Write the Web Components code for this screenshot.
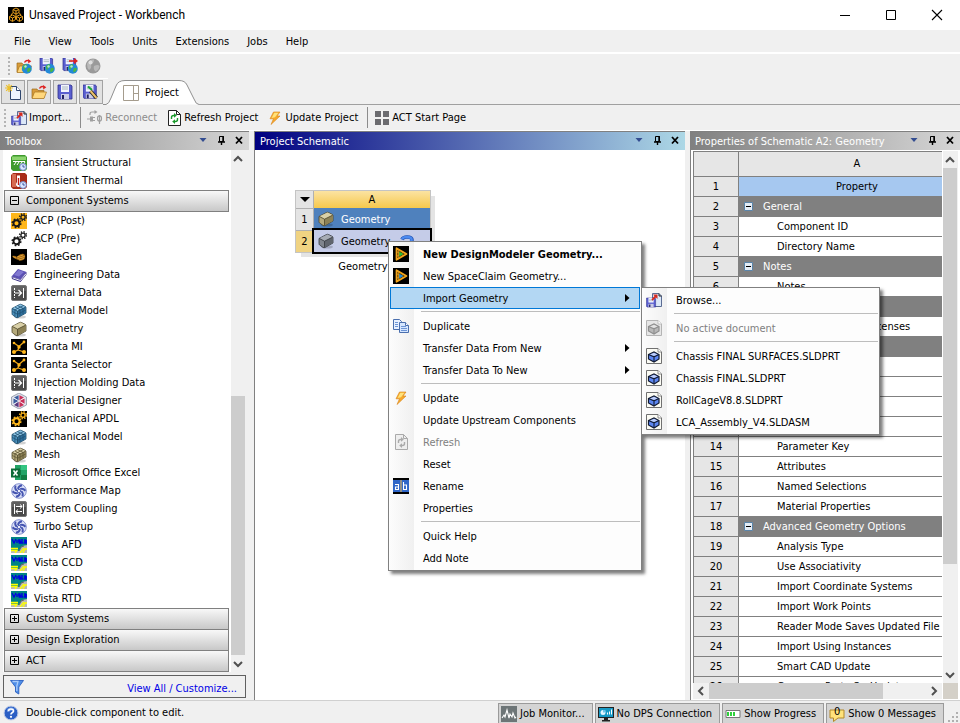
<!DOCTYPE html>
<html lang="en">
<head>
<meta charset="utf-8">
<meta name="viewport" content="width=device-width, initial-scale=1">
<title>Unsaved Project - Workbench</title>
<style>
  html, body {
    height: 100%;
    margin: 0;
  }
  body {
    font: 11px/16px "DejaVu Sans Condensed", "Noto Sans", sans-serif;
    color: #000;
    background: #f0f0f0;
    overflow: hidden;
  }
</style>
</head>
<body>
<workbench-app></workbench-app>

<script>
// Small base: every element renders its own css + html into an open shadow root
class WbElement extends HTMLElement {
  constructor() {
    super();
    this.attachShadow({ mode: 'open' });
  }

  connectedCallback() {
    this.shadowRoot.innerHTML = `<style>
      * { box-sizing: border-box; }
      button { font: inherit; color: inherit; margin: 0; padding: 0; border: 0; background: none; text-align: left; white-space: nowrap; }
      ${this.css()}
    </style>${this.render()}`;
  }

  css() { return ':host { display: block; }'; }
  render() { return '<slot></slot>'; }
}

const define = (name, cls) => {
  if (!customElements.get(name)) customElements.define(name, cls);
};

/* ---------- icons ---------- */

const gear = (x, y, r, c, w) => `
  <circle cx="${x}" cy="${y}" r="${r}" fill="none" stroke="${c}" stroke-width="${w}"/>
  <circle cx="${x}" cy="${y}" r="${r + 1.3}" fill="none" stroke="${c}" stroke-width="1.5" stroke-dasharray="${((r + 1.3) * Math.PI / 8).toFixed(2)}"/>`;
const gears = (c) => gear(5.5, 10.3, 3, c, 1.9) + gear(12, 4.2, 2.1, c, 1.3);

const box = (top, front, side, line) => `
  <ellipse cx="9" cy="14" rx="6" ry="1.6" fill="#000" opacity=".18"/>
  <path d="M1 5.5 8.5 1.5Q9.5 1 10.5 1.5L14.5 3.5Q15 4 15 5L15 10 7 14.5Q6 15 5 14.4L1.6 12Q1 11.5 1 10.5Z" fill="${front}" stroke="${line}" stroke-width=".8"/>
  <path d="M1.5 5.3 9.5 1.4 14.6 4 6.4 8.2Z" fill="${top}"/>
  <path d="M6.6 8.2 14.7 4.3V10L6.6 14.4Z" fill="${side}"/>
  <path d="M1.4 5.5 6.5 8.2V14.3M6.5 8.2 14.6 4.2" fill="none" stroke="${line}" stroke-width=".8"/>`;
const meshLines = (c) => `<path d="M4 4 9 6.8V13M6.8 2.7 12 5.4V11.5M3.9 7V13M1.3 8.4 6.5 11.3 14.7 7M4 6.8 12 2.8" fill="none" stroke="${c}" stroke-width=".8"/>`;

const floppy = (x, y, s, c = '#5a5fd0') => `
  <g transform="translate(${x} ${y}) scale(${s})">
    <path d="M0 0H13L14 1V14H1L0 13Z" fill="${c}" stroke="#30308c" stroke-width=".8"/>
    <path d="M3 0H11V7H3Z" fill="#f2f4ff"/><path d="M4 2H10M4 4H10" stroke="#9aa" stroke-width=".8"/>
    <path d="M3 9H11V14H3Z" fill="#c9cbe6"/><path d="M4 10H6V14H4Z" fill="#202060"/>
  </g>`;
const globe = `<circle cx="10.8" cy="10.8" r="5" fill="#2389d8"/><path d="M7 8Q9 5.500 11 6.500 12 8 10 9.500 8.500 10 8.500 12 6.500 11 7 8ZM11.500 10.500Q14 9 15 11 14 14 12 14.600 10.500 12.500 11.500 10.500Z" fill="#49b548"/><circle cx="9.500" cy="8.500" r="1.200" fill="#cdefff" opacity=".8"/>`;
const page = (stroke = '#222', fill = '#fff') => `<path d="M2.500 .500H10.500L14.500 4.500V15.500H2.500Z" fill="${fill}" stroke="${stroke}"/><path d="M10.500 .500V4.500H14.500" fill="none" stroke="${stroke}"/>`;
const refresh = (c) => `<path d="M5.500 9V7.500Q5.500 5.500 7.500 5.500H8.500" fill="none" stroke="${c}" stroke-width="1.400"/><path d="M8 3 10.800 5.400 8 7.800Z" fill="${c}"/><path d="M11.500 8V9.500Q11.500 11.500 9.500 11.500H8.500" fill="none" stroke="${c}" stroke-width="1.400"/><path d="M9 9.200 6.200 11.600 9 14Z" fill="${c}"/>`;
const partDoc = (edge, face, dark, bg) => `
  <path d="M.500 .500H12L15.500 4V15.500H.500Z" fill="${bg}" stroke="${edge}"/>
  <path d="M12 .500V4H15.500" fill="#fff" stroke="${edge}" stroke-width=".8"/>
  <path d="M2.500 6.500 8 4 13 6.500V11L8 14 2.500 11Z" fill="${face}" stroke="${dark}" stroke-width="1.200"/>
  <path d="M2.500 6.500 8 8.800 13 6.500M8 8.800V14" fill="none" stroke="${dark}" stroke-width="1.100"/>
  <path d="M4 6.400 8 4.800 11.500 6.400 8 8Z" fill="#fff" opacity=".6"/>`;
const importDoc = `<path d="M6.500 1.500H13L15.500 4V14.500H6.500Z" fill="#dce8f8" stroke="#5b6c93"/><path d="M13 1.500V4H15.500" fill="none" stroke="#222"/>${floppy(.5, 6, .65)}<path d="M6 8 10 4" stroke="#d62a1e" stroke-width="1.800"/><path d="M7 2.500H11.500V7Z" fill="#d62a1e"/>`;
const bolt = `<path d="M6.500 2 13 2 10 6 13 6 4 14.500 6.500 8.800 3 8.800Z" fill="#f6a82c" stroke="#d98316" stroke-width=".6"/><path d="M7.300 2.800 11.500 2.800 8 7.200 4.600 8Z" fill="#ffe27a"/>`;
const granta = `<path d="M0 0H16V16H0Z" fill="#000"/><path d="M3 4 8 7.500 13 3M8 7.500 7 11 3 13M7 11 13 13" fill="none" stroke="#f0a818" stroke-width="1.300"/><circle cx="3" cy="4" r="1.300" fill="#ffb71b"/><circle cx="13" cy="3" r="1.400" fill="#ffb71b"/><circle cx="3" cy="13" r="2" fill="#ffb71b"/><circle cx="13" cy="13" r="2" fill="#ffb71b"/><circle cx="8" cy="8" r="1.700" fill="#ffb71b"/>`;
const slab = (extra) => `<path d="M2 .500H14Q15.500 .500 15.500 2V14Q15.500 15.500 14 15.500H2Q.500 15.500 .500 14V2Q.500 .500 2 .500Z" fill="#4a4a4a" stroke="#777"/><path d="M1 1H15V6H1Z" fill="#fff" opacity=".12"/>${extra}`;
const fan = `<circle cx="8" cy="8" r="7.300" fill="#dde2f8" stroke="#8490cf"/><g stroke="#4454b0" stroke-width="1.900" fill="none">${[0, 60, 120, 180, 240, 300].map(a => `<path d="M7 6Q7.500 3 11 2.300" transform="rotate(${a} 8 8)"/>`).join('')}</g><circle cx="8" cy="8" r="1.600" fill="#fff" stroke="#4454b0" stroke-width=".9"/>`;
const vista = `<path d="M0 0H16V16H0Z" fill="#008484"/><path d="M1 2 3 6 5 2M6 3V6M9.500 3H7.800V4.500H9.500V6H7.600M11 2V6H12.500M15 3H13.800V6H15.200V3" stroke="#0000e0" stroke-width="1.400" fill="none"/><path d="M0 16V14H8L11 9 16 8V16Z" fill="#b9b9b9"/><path d="M0 11.500H7M0 13.500H6L4 16M9 16 13 11M12 16 14 12 16 12" stroke="#ffff00" stroke-width="1.300" fill="none"/><path d="M8 14 10 10 13 9" stroke="#666" fill="none"/>`;
const modelerTri = (c) => `<path d="M0 0H16V16H0Z" fill="#000"/><path d="M3.500 2.200 13.500 8 3.500 13.800Z" fill="#4a3205" stroke="#f2a51c" stroke-width="1.700" stroke-linejoin="round"/><path d="M5.800 3.500V12.500M3.500 5.500 10 9.500M3.500 10.500 10 6.500" stroke="#e09a1c" fill="none"/><path d="M6.300 5.700 10.300 8 6.300 10.400Z" fill="${c}"/>`;
const clock = `<circle cx="12" cy="12" r="3.400" fill="#dbe6ff" stroke="#6c86c4"/><path d="M12 10V12H13.800" stroke="#2b4a9a" stroke-width=".9" fill="none"/>`;
const folder = `<path d="M1 5H6L7 6.500H13V14H1Z" fill="#d89b3a" stroke="#9b6a1c" stroke-width=".7"/><path d="M3.500 8H15.500L13 14.500H1Z" fill="#ffd77c" stroke="#a8741f" stroke-width=".7"/>`;
const redo = `<path d="M8.500 4.500Q10 1.500 13 3" stroke="#d22" stroke-width="1.300" fill="none"/><path d="M12 1 15.300 3.200 12.300 5.500Z" fill="#d22"/>`;

const ICONS = {
  app: `<path d="M0 0H16V16H0Z" fill="#000"/><g fill="none" stroke="#e09a1c"><path d="M8 1 11 2.500V5.500L8 7 5 5.500V2.500ZM5 2.500 8 4 11 2.500M8 4V7"/><path d="M4.500 8 7.500 9.500V12.500L4.500 14.500 1.500 12.500V9.500ZM1.500 9.500 4.500 11 7.500 9.500M4.500 11V14M11.500 8 14.500 9.500V12.500L11.500 14.500 8.500 12.500V9.500ZM8.500 9.500 11.500 11 14.500 9.500M11.500 11V14"/><path d="M5 5.500 3 8M11 5.500 13 8M8 7V10"/></g>`,
  openGlobe: folder + redo + globe,
  saveGlobe: floppy(1, 0, .9) + globe,
  saveAsGlobe: floppy(1, 0, .9) + `<path d="M7 3H13" stroke="#d22" stroke-width="1.600"/><path d="M12 0 16 3 12 6Z" fill="#d22"/>` + globe,
  greyGlobe: `<circle cx="8" cy="8" r="7.500" fill="#9a9a9a"/><path d="M2 6Q4 1 9 1.500 9 5 6 6.500 7 10 4 12 2 10 2 6ZM9 8Q13 6 14.500 8 14 12 10.500 13.500Q8 11 9 8Z" fill="#b9b9b9"/><circle cx="5.500" cy="4.500" r="2" fill="#e8e8e8" opacity=".8"/>`,
  newDoc: `<path d="M5.500 2.500H11.500L15.500 6.500V15.500H5.500Z" fill="#eef5ff" stroke="#30476e"/><path d="M11.500 2.500V6.500H15.500" fill="#fff" stroke="#30476e"/><path d="M4 0V8M0 4H8M1.200 1.200 6.800 6.800M6.800 1.200 1.200 6.800" stroke="#ecc02d" stroke-width="1.200"/>`,
  open: folder + redo,
  save: floppy(1, 1, 1),
  saveAs: floppy(0, 1, .95) + `<path d="M5 2.500 9 6" stroke="#1ca83a" stroke-width="2"/><path d="M7.500 7 13.500 14" stroke="#222" stroke-width="3.600"/><path d="M7.500 7 13.500 14" stroke="#ecc06a" stroke-width="2"/>`,
  layout: `<path d="M.500 .500H15.500V15.500H.500ZM10.500 .500V15.500M10.500 8.500H15.500" fill="#fff" stroke="#a59c8d"/>`,
  import: importDoc,
  reconnect: `<g fill="none" stroke="#a0a0a0" stroke-width="1.200"><path d="M3 5V4Q3 2 5 2H8"/><ellipse cx="12.500" cy="8.500" rx="2" ry="2.600"/><path d="M12.500 5V14M0 9H3"/></g><path d="M7.500 0 10.500 2 7.500 4ZM3 6.500H6V11.500H3ZM6 7H8V8H6ZM6 10H8V11H6Z" fill="#a0a0a0"/>`,
  refresh: page() + refresh('#1a9a2c'),
  refreshGrey: page('#aaa', '#eee') + refresh('#aaa'),
  bolt,
  grid: `<path d="M1 1H7V7H1ZM9 1H15V7H9ZM1 9H7V15H1ZM9 9H15V15H9Z" fill="#6b6b6f"/>`,
  structural: `<path d="M2 0H14L16 2V14L14 16H2L0 14V2Z" fill="#3f9a2e"/><path d="M1 1.500H15V5H1Z" fill="#8bd46e"/><path d="M2 6.500H14M3 10 5 7M6 10 8 7M9 10 11 7M12 10 14 7" stroke="#fff" fill="none"/>` + clock,
  thermal: `<path d="M2 0H14L16 2V14L14 16H2L0 14V2Z" fill="#a82c18"/><path d="M1 1H5V14H1Z" fill="#d66a50"/><path d="M6 2.500H9V9L10 11Q10 14 7.500 14 5 14 5 11L6 9Z" fill="#fff"/><path d="M7.500 5V12" stroke="#c41a10" stroke-width="1.400"/>` + clock,
  acpPost: `<path d="M0 0H16V16H0Z" fill="#ffb71b"/>` + gears('#1a1a1a'),
  acpPre: gears('#1a1a1a'),
  apdl: `<path d="M0 0H16V16H0Z" fill="#000"/>` + gears('#ffb71b'),
  bladegen: `<path d="M0 0H16V16H0Z" fill="#000"/><path d="M1 7Q4 6 6 8 9 4 13 5 15 7 13.500 10 10 13 6 10.500 3 10 1 7Z" fill="#9a6414"/><path d="M6 8 12 6M6.500 9.500 13.500 7.500M8 11 13 9.500M2 7.500 5 9" stroke="#f2ae3e" stroke-width=".8" fill="none"/>`,
  book: `<path d="M.500 9.500 7 2 15.500 5 9.500 12.500Z" fill="#5b50b4"/><path d="M3 8 7.500 3 13 5 8 9.600Z" fill="#8078d0"/><path d="M.500 9.500 9.500 12.500 15.500 5V7.500L9.500 15 1 12Z" fill="#352c80"/><path d="M1.500 10.800 9.500 13.500 15 6.800" stroke="#e8e6f8" stroke-width="1" fill="none"/>`,
  external: slab('<path d="M3.500 3V13M12.500 3V13" stroke="#fff" stroke-dasharray="2 1"/><path d="M12.500 3V13" stroke="#fff"/><path d="M4 8H10M7.500 5 10.500 8 7.500 11" fill="none" stroke="#fff" stroke-width="1.200"/>'),
  coupling: slab('<path d="M3.500 3V13M12.500 3V13M5 5.500H11M5 10.500H11M9 3.500 11.200 5.500 9 7.500M7 8.500 4.800 10.500 7 12.500" fill="none" stroke="#fff"/>'),
  boxBlue: box('#8cc2e2', '#4d92bd', '#2f6f9b', '#1c4663') + meshLines('#1f5275'),
  boxTan: box('#d9d0a8', '#b5aa7c', '#8d8256', '#4c452a'),
  boxGrey: box('#a6abb3', '#80858d', '#60656d', '#33373c'),
  mesh: box('#d9d0a8', '#b5aa7c', '#8d8256', '#4c452a') + meshLines('#5e5533'),
  granta,
  material: `<path d="M8 0 15.500 4V12L8 16 .500 12V4Z" fill="#d9dde6" stroke="#8d94a6" stroke-width=".8"/><path d="M8 8V2L3 4.500ZM8 8 2.500 5.500V11Z" fill="#3d5d9e"/><path d="M8 8V2L13 4.500ZM8 8 13.500 11V5.500ZM8 8 13 12 8 14.500Z" fill="#c9305a"/><path d="M8 8V14.500L3 12Z" fill="#5b3a80"/><path d="M8 1.500V15M2 4.500 14 11.500M14 4.500 2 11.500" stroke="#fff" stroke-width=".7"/>`,
  excel: `<path d="M4 0H16V15H4Z" fill="#21a366"/><path d="M10 0H16V5H10Z" fill="#33c481"/><path d="M4 5H10V10H4ZM10 10H16V15H10Z" fill="#107c41"/><path d="M0 3.500H9V12.500H0Z" fill="#0e6b38"/><path d="M2.500 5.500 6.500 10.500M6.500 5.500 2.500 10.500" stroke="#fff" stroke-width="1.500"/>`,
  fan,
  vista,
  funnel: `<path d="M1.500 1.500H14.500L9.800 8V15L6.500 13V8Z" fill="#4f8fe8" stroke="#2a5fc0" stroke-width=".9"/><path d="M3.500 2.500H9L7.800 7V12" fill="none" stroke="#a9cbfa" stroke-width="1.300"/>`,
  help: `<circle cx="8" cy="8" r="7" fill="#2b5fc4" stroke="#c7d2e8"/><path d="M4 4Q8 .500 12 4 9 6 4 7Z" fill="#79a5ee" opacity=".7"/><path d="M5.500 6.300Q5.500 4 8 4 10.600 4 10.500 6.200 10.400 7.200 8.800 8 8 8.500 8 9.600" fill="none" stroke="#fff" stroke-width="1.700"/><circle cx="8" cy="11.800" r="1.100" fill="#fff"/>`,
  question: `<path d="M3 4.500Q4 2 8 2 13 2 13 5 13 8 9 9V12" fill="none" stroke="#1f4fae" stroke-width="3.600"/><path d="M3 4.200Q4 2 8 2 12.700 2 12.700 5 12.500 7.800 8.800 8.700V12" fill="none" stroke="#4b8af0" stroke-width="2.400"/>`,
  modeler: modelerTri('#22c03a'),
  spaceclaim: modelerTri('#1c8ce0'),
  duplicate: `<g stroke="#4a6fae"><path d="M.500 1.500H6.500L8.500 3.500V11.500H.500Z" fill="#e8f1ff"/><path d="M6.500 4.500H12.500L15.500 7.500V14.500H6.500Z" fill="#d5e6ff"/><path d="M2 4.500H5M2 6.500H5M2 8.500H5M8 8.500H13M8 10.500H14M8 12.500H14" stroke="#6d95d6"/><path d="M12.500 4.500V7.500H15.500" fill="#fff"/></g>`,
  rename: `<path d="M0 0H16V16H0Z" fill="#000"/><path d="M0 2H16V14H0Z" fill="#2f66c8"/><path d="M8 2V14" stroke="#f2b94a"/><path d="M2 6.500H5.500V11.500H2.500V9H5.500M10.500 4V11.500H13.500V7H10.500" fill="none" stroke="#fff" stroke-width="1.100"/>`,
  part: partDoc('#707070', '#5c86f2', '#111a30', '#fbfbf4'),
  partGrey: partDoc('#b4b4b4', '#b8b8b8', '#8e8e8e', '#e6e6e6'),
  monitor: `<path d="M0 0H16V16H0Z" fill="#6d7577"/><path d="M1 12 3 9 4 11 6 4 8 12 9 8 11 11 12 7 14 12 15 11" fill="none" stroke="#fff" stroke-width="1.100"/>`,
  dps: `<path d="M0 1H16V12H0Z" fill="#222"/><path d="M1 2H15V11H1Z" fill="#1799c4"/><path d="M6 12H10V14H12V15.500H4V14H6Z" fill="#222"/><circle cx="5" cy="6.500" r="2.500" fill="#e4f6ff"/><path d="M5 6.500V4H7.500V6.500Z" fill="#6cc4e6"/><path d="M9 8.500H10V6.500H9ZM11 8.500H12V5.500H11ZM13 8.500H14V3.500H13Z" fill="#fff"/>`,
  progress: `<path d="M1 4.500H15V11.500H1Z" fill="#fff" stroke="#777"/><path d="M2 6H4V10H2ZM5 6H7V10H5ZM8 6H10V10H8Z" fill="#2fd03c"/>`,
  message: `<path d="M1 4H15V12H9L4.500 15.500V12H1Z" fill="#ffe27a" stroke="#b4892a"/>`,
  down: `<path d="M4.500 6H11.500L8 10Z" fill="#334d91"/>`,
  pin: `<path d="M6.500 4.500H10.500V9.500H6.500Z" fill="none" stroke="#000"/><path d="M10 4V9M5 10H12M8.500 10V13" stroke="#000" stroke-width="1.400" fill="none"/>`,
  close: `<path d="M5 5 11 11.500M11 5 5 11.500" stroke="#000" stroke-width="1.800"/>`,
  arrowUp: `<path d="M4 10 8 6 12 10" fill="none" stroke="#505050" stroke-width="2"/>`,
  arrowDown: `<path d="M4 6 8 10 12 6" fill="none" stroke="#505050" stroke-width="2"/>`,
  arrowLeft: `<path d="M10 4 6 8 10 12" fill="none" stroke="#505050" stroke-width="2"/>`,
  arrowRight: `<path d="M6 4 10 8 6 12" fill="none" stroke="#505050" stroke-width="2"/>`,
  plus: `<path d="M3.500 3.500H11.500V11.500H3.500ZM5 7.500H10M7.500 5V10" fill="none" stroke="#000"/>`,
  minus: `<path d="M3.500 3.500H11.500V11.500H3.500ZM5 7.500H10" fill="none" stroke="#000"/>`,
  collapse: `<path d="M4.500 3.500H12.500V11.500H4.500Z" fill="#e4ecf4" stroke="#5b84a8"/><path d="M6 7.500H11" stroke="#000"/>`,
  winMin: `<path d="M3 8.500H13" stroke="#000"/>`,
  winMax: `<path d="M3.500 3.500H12.500V12.500H3.500Z" fill="none" stroke="#000"/>`,
  winClose: `<path d="M3 3 13 13M13 3 3 13" stroke="#000" stroke-width="1.100"/>`,
  subArrow: `<path d="M6 4V12L10.500 8Z" fill="#000"/>`
};

class WbIcon extends WbElement {
  css() {
    return ':host { display: inline-block; width: 16px; height: 16px; flex: none; } svg { display: block; width: 100%; height: 100%; }';
  }
  render() {
    return `<svg viewBox="0 0 16 16" aria-hidden="true">${ICONS[this.getAttribute('name')] || ''}</svg>`;
  }
}

/* ---------- window chrome ---------- */

class WbTitlebar extends WbElement {
  css() {
    return `
      :host { display: flex; align-items: center; height: 30px; padding-left: 8px; background: #fff; font: 12px/16px Roboto, "Noto Sans", sans-serif; }
      .title { flex: 1; padding-left: 5px; }
      button { display: grid; place-items: center; width: 46px; height: 28px; }
    `;
  }
  render() {
    return `<wb-icon name="app"></wb-icon><span class="title"><slot></slot></span>
      <button aria-label="Minimize"><wb-icon name="winMin"></wb-icon></button>
      <button aria-label="Maximize"><wb-icon name="winMax"></wb-icon></button>
      <button aria-label="Close"><wb-icon name="winClose"></wb-icon></button>`;
  }
}

class WbMenubar extends WbElement {
  css() {
    return `
      :host { display: block; border-bottom: 2px solid #fff; }
      nav { display: flex; align-items: center; height: 22px; gap: 18px; padding: 2px 14px 0; }
    `;
  }
  render() {
    const items = ['File', 'View', 'Tools', 'Units', 'Extensions', 'Jobs', 'Help'];
    return `<nav>${items.map(i => `<button>${i}</button>`).join('')}</nav>`;
  }
}

class WbGrip extends WbElement {
  css() {
    return ':host { display: block; flex: none; width: 2px; height: 18px; background: repeating-linear-gradient(#b4b4b4 0 2px, transparent 2px 4px); }';
  }
  render() { return ''; }
}

class WbToolButton extends WbElement {
  css() {
    return `
      :host { display: block; flex: none; }
      button { display: flex; align-items: center; gap: 2px; height: 20px; }
      :host([framed]) button { width: 24px; height: 24px; justify-content: center; border: 1px solid #a3a3a3; background: #e2e2e2; }
      button:disabled { color: #8c8c8c; }
    `;
  }
  render() {
    const label = this.getAttribute('label');
    return `<button ${label ? `aria-label="${label}"` : ''} ${this.hasAttribute('disabled') ? 'disabled' : ''}><wb-icon name="${this.getAttribute('icon')}"></wb-icon><slot></slot></button>`;
  }
}

class WbToolbars extends WbElement {
  css() {
    return `
      :host { display: block; }
      .row { display: flex; align-items: center; }
      .remote { height: 25px; gap: 7px; padding-left: 8px; width: 108px; border-bottom: 1px solid #fff; }
      .remote wb-grip { margin-right: -1px; }
      .tabs { height: 26px; align-items: stretch; }
      .files { display: flex; align-items: center; gap: 2px; padding-left: 1px; }
      .tab { display: grid; }
      .tab svg { grid-area: 1 / 1; width: 96px; height: 26px; display: block; }
      .tab button { grid-area: 1 / 1; display: flex; align-items: center; gap: 6px; padding: 2px 0 0 20px; }
      .rule { flex: 1; border-bottom: 1px solid #a0a0a0; }
      .actions { height: 26px; gap: 9px; padding-left: 4px; border-bottom: 1px solid #fff; }
      .actions wb-grip { margin-right: -4px; }
      .sep { width: 1px; height: 21px; background: #8c8c8c; margin-right: -3px; }
    `;
  }
  render() {
    return `
      <div class="row remote">
        <wb-grip></wb-grip>
        <wb-tool-button icon="openGlobe" label="Open from repository"></wb-tool-button>
        <wb-tool-button icon="saveGlobe" label="Save to repository"></wb-tool-button>
        <wb-tool-button icon="saveAsGlobe" label="Send changes"></wb-tool-button>
        <wb-tool-button icon="greyGlobe" label="Manage connections" disabled></wb-tool-button>
      </div>
      <div class="row tabs">
        <div class="files">
          <wb-tool-button framed icon="newDoc" label="New"></wb-tool-button>
          <wb-tool-button framed icon="open" label="Open"></wb-tool-button>
          <wb-tool-button framed icon="save" label="Save"></wb-tool-button>
          <wb-tool-button framed icon="saveAs" label="Save as"></wb-tool-button>
        </div>
        <div class="tab">
          <svg viewBox="0 0 96 26" aria-hidden="true"><path d="M0 25.500H3Q6 25 8 19L13 7Q15 1.500 22 1.500H76Q82 1.500 84 6L91 20Q93 25.500 96 25.500" fill="#fff" stroke="#909090"/></svg>
          <button><wb-icon name="layout"></wb-icon>Project</button>
        </div>
        <div class="rule"></div>
      </div>
      <div class="row actions">
        <wb-grip></wb-grip>
        <wb-tool-button icon="import">Import...</wb-tool-button>
        <span class="sep"></span>
        <wb-tool-button icon="reconnect" disabled>Reconnect</wb-tool-button>
        <wb-tool-button icon="refresh">Refresh Project</wb-tool-button>
        <wb-tool-button icon="bolt">Update Project</wb-tool-button>
        <span class="sep"></span>
        <wb-tool-button icon="grid">ACT Start Page</wb-tool-button>
      </div>`;
  }
}

/* ---------- docked panels ---------- */

class WbPanel extends WbElement {
  css() {
    return `
      :host { display: flex; flex-direction: column; min-width: 0; min-height: 0; border-top: 1px solid #808080; }
      header { display: flex; align-items: center; height: 18px; flex: none; padding: 2px 2px 0 5px; color: #fff; background: linear-gradient(90deg, #808080, #d6d6d6); }
      :host([active]) { border-left: 1px solid #808080; }
      :host([active]) header { background: linear-gradient(90deg, #000080, #add8e6); }
      h2 { flex: 1; min-width: 0; margin: 0; font: inherit; white-space: nowrap; overflow: hidden; }
      .tools { display: flex; gap: 2px; }
      .body { flex: 1; display: flex; flex-direction: column; min-height: 0; }
    `;
  }
  render() {
    return `<header><h2>${this.getAttribute('heading')}</h2><span class="tools">
        <button aria-label="Options"><wb-icon name="down"></wb-icon></button>
        <button aria-label="Pin"><wb-icon name="pin"></wb-icon></button>
        <button aria-label="Close"><wb-icon name="close"></wb-icon></button>
      </span></header><div class="body"><slot></slot></div>`;
  }
}

// range: flex weights of the track before, on and after the thumb
class WbScrollbar extends WbElement {
  css() {
    return `
      :host { display: flex; flex-direction: column; flex: none; width: 15px; background: #f0f0f0; }
      :host([horizontal]) { flex-direction: row; width: auto; height: 16px; flex: 1; }
      button { flex: none; height: 17px; }
      :host(:not([horizontal])) button { margin-left: -1px; }
      :host([horizontal]) button { height: 16px; }
      .track { flex: 1; display: flex; flex-direction: inherit; }
      .thumb { background: #cdcdcd; }
      :host(:not([horizontal])) .thumb { width: 14px; }
      wb-icon { display: block; }
    `;
  }
  render() {
    const [before, thumb, after] = this.getAttribute('range').split(' ');
    const h = this.hasAttribute('horizontal');
    return `<button aria-label="Scroll back"><wb-icon name="${h ? 'arrowLeft' : 'arrowUp'}"></wb-icon></button>
      <div class="track"><i style="flex:${before}"></i><i class="thumb" style="flex:${thumb}"></i><i style="flex:${after}"></i></div>
      <button aria-label="Scroll forward"><wb-icon name="${h ? 'arrowRight' : 'arrowDown'}"></wb-icon></button>`;
  }
}

class WbToolItem extends WbElement {
  css() {
    return ':host { display: flex; align-items: center; gap: 7px; box-sizing: border-box; height: 18px; padding: 2px 0 0 8px; white-space: nowrap; }';
  }
  render() {
    return `<wb-icon name="${this.getAttribute('icon')}"></wb-icon><slot></slot>`;
  }
}

class WbToolGroup extends WbElement {
  css() {
    return `
      :host { display: block; }
      :host([open]) { margin: 1px 0; }
      button { display: flex; align-items: center; gap: 3px; width: calc(100% - 3px); height: 22px; margin: 0 2px -1px 1px; padding: 0 2px; border: 1px solid #808080; background: linear-gradient(#f8f8f8, #c8c8c8); }
    `;
  }
  render() {
    const open = this.hasAttribute('open');
    return `<button aria-expanded="${open}"><wb-icon name="${open ? 'minus' : 'plus'}"></wb-icon>${this.getAttribute('heading')}</button><slot></slot>`;
  }
}

class WbToolbox extends WbElement {
  css() {
    return `
      :host { flex: 1; display: flex; flex-direction: column; min-height: 0; padding: 0 3px 2px; gap: 3px; }
      .scroll { flex: 1; display: flex; min-height: 0; }
      .list { flex: 1; min-width: 0; padding-top: 3px; background: #fff; overflow: hidden; }
      footer { display: flex; align-items: center; justify-content: space-between; height: 23px; flex: none; padding: 0 8px 0 5px; border: 1px solid #606060; }
      a { color: #0000e6; text-decoration: none; padding-top: 4px; }
    `;
  }
  render() {
    const item = ([icon, text]) => `<wb-tool-item icon="${icon}">${text}</wb-tool-item>`;
    const top = [['structural', 'Transient Structural'], ['thermal', 'Transient Thermal']];
    const components = [
      ['acpPost', 'ACP (Post)'], ['acpPre', 'ACP (Pre)'], ['bladegen', 'BladeGen'],
      ['book', 'Engineering Data'], ['external', 'External Data'], ['boxBlue', 'External Model'],
      ['boxTan', 'Geometry'], ['granta', 'Granta MI'], ['granta', 'Granta Selector'],
      ['external', 'Injection Molding Data'], ['material', 'Material Designer'], ['apdl', 'Mechanical APDL'],
      ['boxBlue', 'Mechanical Model'], ['mesh', 'Mesh'], ['excel', 'Microsoft Office Excel'],
      ['fan', 'Performance Map'], ['coupling', 'System Coupling'], ['fan', 'Turbo Setup'],
      ['vista', 'Vista AFD'], ['vista', 'Vista CCD'], ['vista', 'Vista CPD'], ['vista', 'Vista RTD']
    ];
    return `
      <div class="scroll">
        <div class="list">
          ${top.map(item).join('')}
          <wb-tool-group open heading="Component Systems">${components.map(item).join('')}</wb-tool-group>
          <wb-tool-group heading="Custom Systems"></wb-tool-group>
          <wb-tool-group heading="Design Exploration"></wb-tool-group>
          <wb-tool-group heading="ACT"></wb-tool-group>
        </div>
        <wb-scrollbar range="229 259 0"></wb-scrollbar>
      </div>
      <footer><wb-icon name="funnel"></wb-icon><a href="#customize">View All / Customize...</a></footer>`;
  }
}

/* ---------- schematic + menus ---------- */

class WbSystem extends WbElement {
  css() {
    return `
      :host { display: block; width: 136px; }
      table { width: 100%; border-collapse: separate; border-spacing: 0; background: #e4e4e4; box-shadow: 5px 5px 0 -1px #e4e4e4; border: 1px solid #c4c4c4; table-layout: fixed; }
      th, td { padding: 0; font-weight: normal; height: 22px; line-height: 16px; }
      th:first-child { width: 18px; border-right: 1px solid #b0b0b0; }
      thead th { height: 17px; }
      thead th + th { background: linear-gradient(#fbe3a2, #f6c84c); }
      tbody th { border-top: 1px solid #b0b0b0; }
      .title td { background: #4f81bd; color: #fff; }
      .cell td { background: #c5cce8; outline: 2px solid #000; }
      .cell th { background: #f0d382; }
      div { display: flex; align-items: center; gap: 7px; padding-left: 4px; }
      span { padding-top: 2px; }
      .state { margin: 2px 0 -2px 2px; }
      p { margin: 6px 0 0; text-align: center; }
      .tri { display: block; margin: 0 auto; width: 0; border: 5px solid transparent; border-top-color: #000; border-bottom: 0; }
    `;
  }
  render() {
    return `
      <table>
        <thead><tr><th><i class="tri"></i></th><th>A</th></tr></thead>
        <tbody>
          <tr class="title"><th>1</th><td><div><wb-icon name="boxTan"></wb-icon><span>Geometry</span></div></td></tr>
          <tr class="cell"><th>2</th><td><div><wb-icon name="boxGrey"></wb-icon><span>Geometry</span><wb-icon class="state" name="question"></wb-icon></div></td></tr>
        </tbody>
      </table>
      <p>Geometry</p>`;
  }
}

class WbMenu extends WbElement {
  css() {
    return `
      :host { display: block; box-sizing: border-box; padding: 1px; border: 1px solid #808080; background: linear-gradient(90deg, #fcfcfc, #f0f0f0) 1px 0 / 24px 100% no-repeat, #fdfdfd; box-shadow: 3px 3px 3px rgba(0, 0, 0, .5); color: #000; }
    `;
  }
}

class WbMenuItem extends WbElement {
  css() {
    return `
      :host { display: block; position: relative; }
      button { display: flex; align-items: center; width: 100%; height: 22px; padding: 0 4px 0 2px; border: 1px solid transparent; }
      .icon { width: 16px; margin-right: 14px; display: flex; }
      .label { flex: 1; padding-top: 2px; }
      :host([strong]) .label { font-weight: bold; }
      :host([selected]) button { border-color: #0078d7; background: #b3d7f3; }
      button:disabled { color: #808080; }
      ::slotted(wb-menu) { position: absolute; left: 100%; top: 0; margin-left: 1px; width: 239px; z-index: 2; }
    `;
  }
  render() {
    const icon = this.getAttribute('icon');
    return `<button ${this.hasAttribute('disabled') ? 'disabled' : ''}><span class="icon">${icon ? `<wb-icon name="${icon}"></wb-icon>` : ''}</span><span class="label">${this.getAttribute('label')}</span>${this.hasAttribute('submenu') ? '<wb-icon name="subArrow"></wb-icon>' : ''}</button><slot></slot>`;
  }
}

class WbMenuSeparator extends WbElement {
  css() { return ':host { display: block; box-sizing: border-box; height: 6px; padding: 2px 0 0 31px; } div { height: 1px; background: #bdbdbd; }'; }
  render() { return '<div></div>'; }
}

class WbSchematic extends WbElement {
  css() {
    return `
      :host { flex: 1; display: block; position: relative; background: #fff; }
      wb-system { position: absolute; left: 40px; top: 40px; }
      .context { position: absolute; left: 133px; top: 91px; width: 254px; z-index: 1; }
    `;
  }
  render() {
    return `
      <wb-system></wb-system>
      <wb-menu class="context">
        <wb-menu-item strong icon="modeler" label="New DesignModeler Geometry..."></wb-menu-item>
        <wb-menu-item icon="spaceclaim" label="New SpaceClaim Geometry..."></wb-menu-item>
        <wb-menu-item selected submenu label="Import Geometry">
          <wb-menu>
            <wb-menu-item icon="import" label="Browse..."></wb-menu-item>
            <wb-menu-separator></wb-menu-separator>
            <wb-menu-item disabled icon="partGrey" label="No active document"></wb-menu-item>
            <wb-menu-separator></wb-menu-separator>
            <wb-menu-item icon="part" label="Chassis FINAL SURFACES.SLDPRT"></wb-menu-item>
            <wb-menu-item icon="part" label="Chassis FINAL.SLDPRT"></wb-menu-item>
            <wb-menu-item icon="part" label="RollCageV8.8.SLDPRT"></wb-menu-item>
            <wb-menu-item icon="part" label="LCA_Assembly_V4.SLDASM"></wb-menu-item>
          </wb-menu>
        </wb-menu-item>
        <wb-menu-separator></wb-menu-separator>
        <wb-menu-item icon="duplicate" label="Duplicate"></wb-menu-item>
        <wb-menu-item submenu label="Transfer Data From New"></wb-menu-item>
        <wb-menu-item submenu label="Transfer Data To New"></wb-menu-item>
        <wb-menu-separator></wb-menu-separator>
        <wb-menu-item icon="bolt" label="Update"></wb-menu-item>
        <wb-menu-item label="Update Upstream Components"></wb-menu-item>
        <wb-menu-item disabled icon="refreshGrey" label="Refresh"></wb-menu-item>
        <wb-menu-item label="Reset"></wb-menu-item>
        <wb-menu-item icon="rename" label="Rename"></wb-menu-item>
        <wb-menu-item label="Properties"></wb-menu-item>
        <wb-menu-separator></wb-menu-separator>
        <wb-menu-item label="Quick Help"></wb-menu-item>
        <wb-menu-item label="Add Note"></wb-menu-item>
      </wb-menu>`;
  }
}

/* ---------- properties ---------- */

class WbProperties extends WbElement {
  css() {
    return `
      :host { flex: 1; display: grid; grid-template: minmax(0, 1fr) 16px / minmax(0, 1fr) 15px; column-gap: 1px; min-height: 0; padding: 1px 2px 1px 2px; background: #fff; border-left: 1px solid #808080; }
      .view { overflow: hidden; background: #fff; }
      table { width: 283px; min-width: 100%; table-layout: fixed; border-collapse: separate; border-spacing: 0; border: solid #808080; border-width: 1px 0 0 1px; }
      th, td { height: 20px; padding: 0; line-height: 16px; font-weight: normal; border: solid #808080; border-width: 0 1px 1px 0; white-space: nowrap; overflow: hidden; text-align: left; }
      th { background: #e6e6e6; text-align: center; }
      thead th { height: 25px; }
      thead th:first-child { width: 45px; }
      td { padding-left: 38px; }
      .caption td { background: #a6c8f0; text-align: center; padding: 0; }
      .group td { background: #808080; color: #fff; padding-left: 1px; }
      .group wb-icon { vertical-align: top; margin-right: 7px; }
      .corner { background: #d4d0c8; }
    `;
  }
  render() {
    const rows = [
      ['caption', 'Property'], ['group', 'General'], ['', 'Component ID'], ['', 'Directory Name'],
      ['group', 'Notes'], ['', 'Notes'], ['group', ''], ['', 'Last Update Used Licenses'],
      ['group', ''], ['', ''], ['', ''], ['', ''],
      ['', ''], ['', 'Parameter Key'], ['', 'Attributes'], ['', 'Named Selections'],
      ['', 'Material Properties'], ['group', 'Advanced Geometry Options'], ['', 'Analysis Type'],
      ['', 'Use Associativity'], ['', 'Import Coordinate Systems'], ['', 'Import Work Points'],
      ['', 'Reader Mode Saves Updated File'], ['', 'Import Using Instances'], ['', 'Smart CAD Update'],
      ['', 'Compare Parts On Update']
    ];
    return `
      <div class="view"><table>
        <thead><tr><th></th><th>A</th></tr></thead>
        <tbody>${rows.map(([kind, text], i) => `<tr class="${kind}"><th>${i + 1}</th><td>${kind === 'group' ? '<wb-icon name="collapse"></wb-icon>' : ''}${text}</td></tr>`).join('')}</tbody>
      </table></div>
      <wb-scrollbar range="0 397 102"></wb-scrollbar>
      <wb-scrollbar horizontal range="0 173 43"></wb-scrollbar>
      <div class="corner"></div>`;
  }
}

/* ---------- status bar ---------- */

class WbStatusbar extends WbElement {
  css() {
    return `
      :host { display: flex; align-items: flex-end; box-sizing: border-box; height: 23px; padding-left: 3px; gap: 2px; border-top: 1px solid #d0d0d0; }
      .hint { flex: 1; display: flex; align-items: center; gap: 7px; height: 20px; }
      button { display: flex; align-items: center; gap: 3px; height: 20px; padding: 0 7px 0 2px; background: #d4d4d4; border: 1px solid #9a9a9a; border-bottom: 0; }
      .msg { display: grid; }
      .msg > * { grid-area: 1 / 1; }
      .msg span { text-align: center; line-height: 11px; }
      .grip { width: 12px; height: 12px; margin: 0 1px; fill: #b0b0b0; }
    `;
  }
  render() {
    return `
      <span class="hint"><wb-icon name="help"></wb-icon>Double-click component to edit.</span>
      <button><wb-icon name="monitor"></wb-icon>Job Monitor...</button>
      <button><wb-icon name="dps"></wb-icon>No DPS Connection</button>
      <button><wb-icon name="progress"></wb-icon>Show Progress</button>
      <button><span class="msg"><wb-icon name="message"></wb-icon><span>0</span></span>Show 0 Messages</button>
      <svg class="grip" viewBox="0 0 12 12" aria-hidden="true"><path d="M9 1H11V3H9ZM5 5H7V7H5ZM9 5H11V7H9ZM1 9H3V11H1ZM5 9H7V11H5ZM9 9H11V11H9Z"/></svg>`;
  }
}

class WorkbenchApp extends WbElement {
  css() {
    return `
      :host { display: flex; flex-direction: column; height: 100vh; cursor: default; }
      main { flex: 1; min-height: 0; display: grid; grid-template-columns: 249px minmax(0, 1fr) 270px; gap: 5px; }
    `;
  }
  render() {
    return `
      <wb-titlebar>Unsaved Project - Workbench</wb-titlebar>
      <wb-menubar></wb-menubar>
      <wb-toolbars></wb-toolbars>
      <main>
        <wb-panel heading="Toolbox"><wb-toolbox></wb-toolbox></wb-panel>
        <wb-panel active heading="Project Schematic"><wb-schematic></wb-schematic></wb-panel>
        <wb-panel heading="Properties of Schematic A2: Geometry"><wb-properties></wb-properties></wb-panel>
      </main>
      <wb-statusbar></wb-statusbar>`;
  }
}

define('wb-icon', WbIcon);
define('wb-titlebar', WbTitlebar);
define('wb-menubar', WbMenubar);
define('wb-grip', WbGrip);
define('wb-tool-button', WbToolButton);
define('wb-toolbars', WbToolbars);
define('wb-panel', WbPanel);
define('wb-scrollbar', WbScrollbar);
define('wb-tool-item', WbToolItem);
define('wb-tool-group', WbToolGroup);
define('wb-toolbox', WbToolbox);
define('wb-system', WbSystem);
define('wb-menu', WbMenu);
define('wb-menu-item', WbMenuItem);
define('wb-menu-separator', WbMenuSeparator);
define('wb-schematic', WbSchematic);
define('wb-properties', WbProperties);
define('wb-statusbar', WbStatusbar);
define('workbench-app', WorkbenchApp);
</script>
</body>
</html>
